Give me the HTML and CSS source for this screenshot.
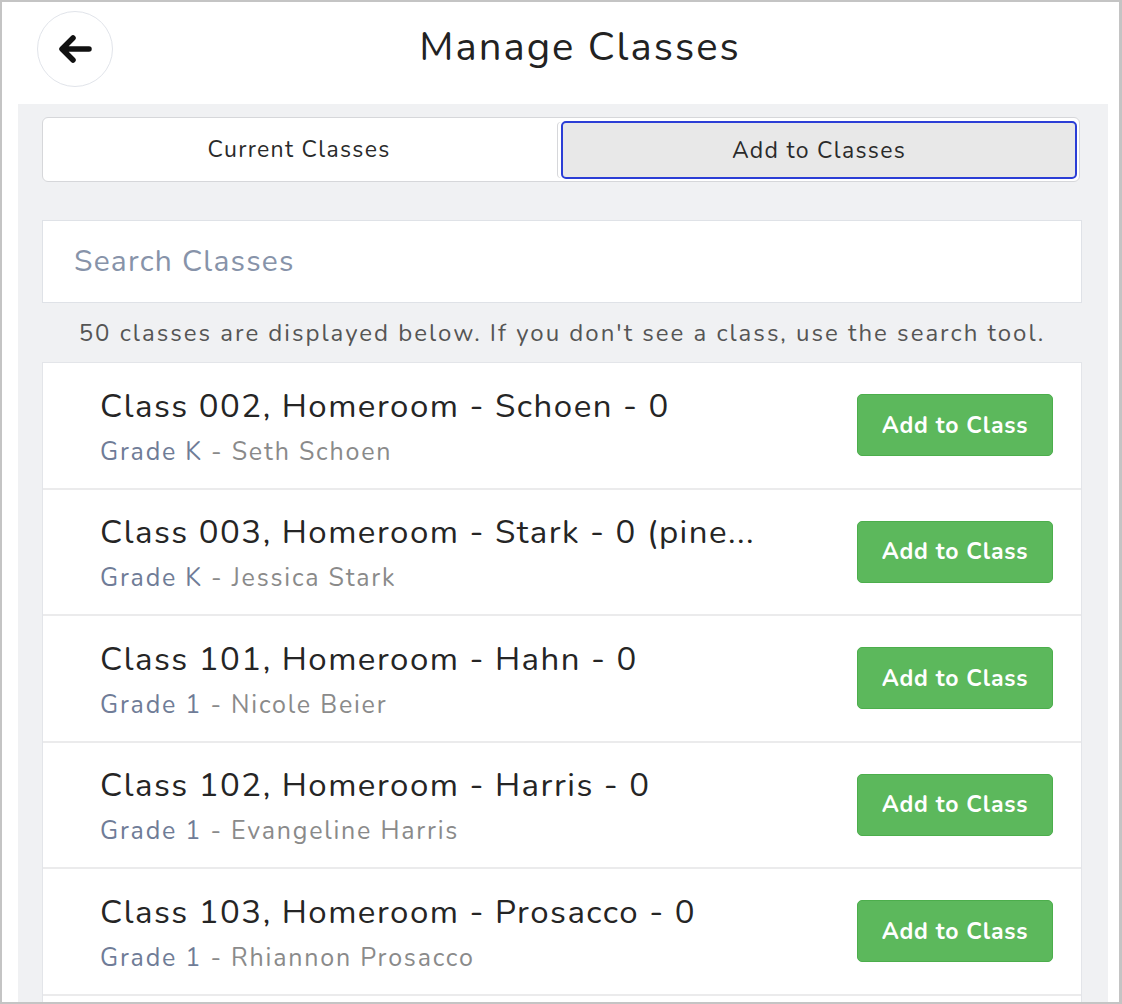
FILE: index.html
```html
<!DOCTYPE html>
<html>
<head>
<meta charset="utf-8">
<link rel="stylesheet" href="styles.css">
</head>
<body>
<div class="frame">
  <header class="header">
    <button class="back" aria-label="Back">
      <svg width="40" height="32" viewBox="0 0 40 32"><path d="M34 16H8M18 5L7 16L18 27" fill="none" stroke="#111" stroke-width="5.5" stroke-linecap="round" stroke-linejoin="round"/></svg>
    </button>
    <h1 class="title">Manage Classes</h1>
  </header>
  <main class="panel">
    <div class="tabs">
      <div class="tab">Current Classes</div>
      <div class="tab active">Add to Classes</div>
    </div>
    <div class="search">Search Classes</div>
    <p class="info">50 classes are displayed below. If you don't see a class, use the search tool.</p>
    <ul class="list">
      <li class="row">
        <div class="text"><div class="name">Class 002, Homeroom - Schoen - 0</div><div class="sub"><span class="grade">Grade K</span> - Seth Schoen</div></div>
        <button class="add">Add to Class</button>
      </li>
      <li class="row">
        <div class="text"><div class="name">Class 003, Homeroom - Stark - 0 (pine...</div><div class="sub"><span class="grade">Grade K</span> - Jessica Stark</div></div>
        <button class="add">Add to Class</button>
      </li>
      <li class="row">
        <div class="text"><div class="name">Class 101, Homeroom - Hahn - 0</div><div class="sub"><span class="grade">Grade 1</span> - Nicole Beier</div></div>
        <button class="add">Add to Class</button>
      </li>
      <li class="row">
        <div class="text"><div class="name">Class 102, Homeroom - Harris - 0</div><div class="sub"><span class="grade">Grade 1</span> - Evangeline Harris</div></div>
        <button class="add">Add to Class</button>
      </li>
      <li class="row">
        <div class="text"><div class="name">Class 103, Homeroom - Prosacco - 0</div><div class="sub"><span class="grade">Grade 1</span> - Rhiannon Prosacco</div></div>
        <button class="add">Add to Class</button>
      </li>
    </ul>
  </main>
</div>
</body>
</html>
```
FILE: styles.css
```css
* { box-sizing: border-box; }
html, body { margin: 0; padding: 0; background: #fff; }
body { font-family: "Nunito", "Lato", "Noto Sans", sans-serif; color: #222; }
.frame {
  width: 1122px;
  height: 1004px;
  border: 2px solid #c4c4c4;
  border-right-width: 3px;
  overflow: hidden;
  background: #fff;
  display: flex;
  flex-direction: column;
}
.header {
  height: 102px;
  flex: none;
  display: flex;
  align-items: center;
  padding: 0 72px 0 35px;
}
.back {
  width: 76px; height: 76px;
  border-radius: 50%;
  border: 1px solid #e1e4ea;
  background: #fff;
  display: flex; align-items: center; justify-content: center;
  padding: 0;
  margin-top: -8px;
}
.title {
  flex: 1;
  text-align: center;
  margin: -12px 0 0 0;
  font-weight: 400;
  font-size: 40px;
  letter-spacing: 2px;
  color: #222;
}
.panel {
  margin: 0 11px 0 16px;
  background: #f0f1f3;
  padding: 13px 26px 0 24px;
  flex: 1;
}
.tabs {
  display: flex;
  height: 65px;
  border: 1px solid #d6d7da;
  border-radius: 6px;
  background: #fff;
  margin-right: 2px;
  overflow: hidden;
}
.tab {
  flex: 1;
  display: flex; align-items: center; justify-content: center;
  font-size: 23px;
  letter-spacing: 1.3px;
  color: #2a2a2a;
}
.tab.active {
  background: #e8e8e8;
  border: 2px solid #2b3ed6;
  border-radius: 5px;
  margin: 3px 2px 2px 6px;
  box-shadow: -4px 0 0 -1px #fff, -5px 0 0 -1px #d6d7da;
}
.search {
  margin-top: 38px;
  height: 83px;
  background: #fff;
  border: 1px solid #dfe2e7;
  display: flex; align-items: center;
  padding-left: 31px;
  font-size: 30px;
  letter-spacing: 1.2px;
  color: #8793a9;
}
.info {
  margin: 16px 0 14px;
  text-align: center;
  font-size: 24px;
  letter-spacing: 2px;
  color: #555;
  line-height: 29px;
  white-space: nowrap;
}
.list {
  list-style: none;
  margin: 0;
  padding: 0 0 20px;
  background: #fff;
  border: 1px solid #e3e5e9;
  border-bottom: none;
}
.row {
  height: 126.5px;
  display: flex;
  align-items: center;
  padding: 0 28px 0 57px;
  border-bottom: 2px solid #ebebec;
}
.text { flex: 1; min-width: 0; padding-top: 4px; }
.name {
  font-size: 33px;
  letter-spacing: 1.5px;
  color: #252525;
  white-space: nowrap;
  line-height: 40px;
}
.sub {
  font-size: 25px;
  letter-spacing: 1.8px;
  color: #8a8a8a;
  line-height: 32px;
  margin-top: 9px;
}
.grade { color: #6f7c97; }
.add {
  flex: none;
  width: 196px;
  height: 62px;
  background: #5cb85c;
  border: 1px solid #4cae4c;
  border-radius: 5px;
  color: #fff;
  font-family: inherit;
  font-size: 23px;
  letter-spacing: 0.8px;
  font-weight: 700;
  margin-top: 0;
}
```
